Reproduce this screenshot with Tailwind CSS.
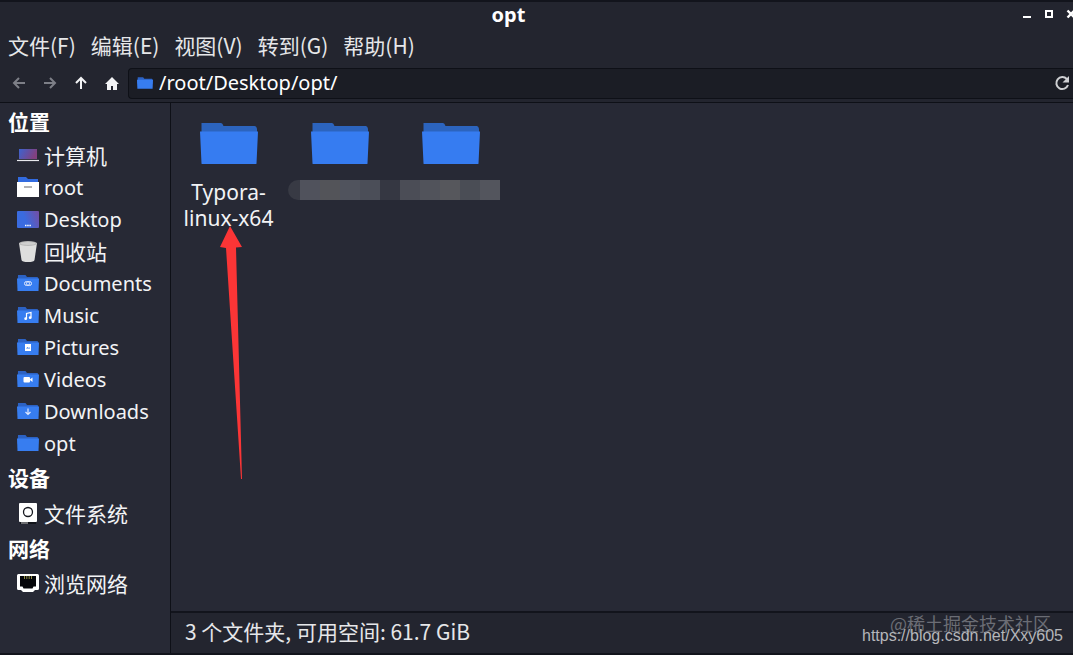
<!DOCTYPE html>
<html lang="zh-CN">
<head>
    <meta charset="UTF-8">
    <meta name="viewport" content="width=device-width, initial-scale=1.0">
    <title>opt</title>
    <script src="https://cdn.jsdelivr.net/npm/@tailwindcss/browser@4"></script>
</head>
<body class="relative h-screen overflow-hidden flex flex-col bg-[#23252f] text-[#f2f3f5] text-[20px] leading-[26px] font-['Noto_Sans','Noto_Sans_CJK_SC',sans-serif] border-t-2 border-b-2 border-[#12141c]">

    <!-- Shared icon shapes -->
    <svg class="hidden">
        <symbol id="folder" viewBox="0 0 22 16">
            <path d="M1 0h7.5l1.5 2h10.5l.7 1v6H.7z" fill="#2c62c4"/>
            <path d="M0 3.5h22l-.5 12.5H.5z" fill="#377df0"/>
        </symbol>
        <symbol id="folder-big" viewBox="0 0 58 42">
            <path d="M1.500 1h19.500q1.500 0 2.500 3h31q2 0 2.500 3v6H1.500z" fill="#2c64be"/>
            <path d="M0 9.500h58l-1.500 32q0 .5-1 .5H2.500q-1 0-1-.5z" fill="#367cf1"/>
        </symbol>
    </svg>

    <!-- Title bar -->
    <header class="relative h-[26px] shrink-0 flex items-center justify-center pr-14">
        <h1 class="font-bold text-white">opt</h1>
        <div class="absolute right-0 top-0 h-full flex items-start gap-2 pt-1 -mr-[5px]">
            <button aria-label="Minimize" class="size-[14px]"><svg viewBox="0 0 14 14" class="size-[14px]"><path d="M3 10h8v2H3z" fill="#fff"/></svg></button>
            <button aria-label="Maximize" class="size-[14px]"><svg viewBox="0 0 14 14" class="size-[14px]"><path d="M4 5h6v6H4z" fill="none" stroke="#fff" stroke-width="2"/></svg></button>
            <button aria-label="Close" class="size-[14px]"><svg viewBox="0 0 14 14" class="size-[14px]"><path d="M3.500 4.500l7 7m0-7l-7 7" stroke="#fff" stroke-width="2.400"/></svg></button>
        </div>
    </header>

    <!-- Menu -->
    <nav class="h-[34px] mb-0.5 shrink-0 flex items-center gap-[15px] pl-2 text-[21px] font-['Noto_Sans_CJK_SC',sans-serif] text-[#e6e7e9]">
        <button>文件(F)</button>
        <button>编辑(E)</button>
        <button>视图(V)</button>
        <button>转到(G)</button>
        <button>帮助(H)</button>
    </nav>

    <!-- Toolbar -->
    <div class="h-[39px] shrink-0 flex items-center border-b border-[#0e1017]">
        <div class="flex items-center gap-[15px] pl-[11px] pr-[8px]">
            <button aria-label="Back" disabled class="size-4"><svg viewBox="0 0 16 16" class="size-4" fill="none" stroke="#7d7f87" stroke-width="2"><path d="M14 8H3M8 3L3 8l5 5"/></svg></button>
            <button aria-label="Forward" disabled class="size-4"><svg viewBox="0 0 16 16" class="size-4" fill="none" stroke="#7d7f87" stroke-width="2"><path d="M2 8h11M8 3l5 5-5 5"/></svg></button>
            <button aria-label="Up" class="size-4"><svg viewBox="0 0 16 16" class="size-4" fill="none" stroke="#f2f3f5" stroke-width="2"><path d="M8 14V3M3 8l5-5 5 5"/></svg></button>
            <button aria-label="Home" class="size-4"><svg viewBox="0 0 16 16" class="size-4" fill="#f2f3f5"><path d="M8 2L1 9h2v6h4v-4h2v4h4V9h2z"/></svg></button>
        </div>
        <div class="flex-1 h-[31px] flex items-center bg-[#1b1d25] border border-r-0 border-[#0e1017] rounded-l pl-2">
            <svg class="w-4 h-3 shrink-0"><use href="#folder"/></svg>
            <input type="text" aria-label="Location" value="/root/Desktop/opt/" class="flex-1 min-w-0 ml-1.5 bg-transparent outline-none text-white">
            <button aria-label="Reload" class="size-4 mr-[3px]"><svg viewBox="0 0 16 16" class="size-4"><path d="M12.800 4A6 6 0 1 0 14 10" fill="none" stroke="#cfd0d3" stroke-width="2"/><path d="M15 1v6.500H8.500z" fill="#cfd0d3"/></svg></button>
        </div>
    </div>

    <div class="flex-1 min-h-0 flex">
        <!-- Sidebar -->
        <aside class="w-[171px] shrink-0 bg-[#272935] border-r border-[#0e1017] pt-px">
            <h2 class="h-9 flex items-center pl-2 text-[21px] font-bold text-white">位置</h2>
            <ul>
                <li><a href="#" class="h-8 flex items-center gap-[5px] pl-[17px] text-[21px]">
                    <svg viewBox="0 0 22 22" class="size-[22px]"><defs><linearGradient id="screen" x2="1" y2=".3"><stop stop-color="#3d63cf"/><stop offset="1" stop-color="#82407f"/></linearGradient></defs><path d="M2 4h18v10H2z" fill="url(#screen)"/><path d="M0 15.500h22" stroke="#e8e9ee" stroke-width="1.200"/></svg>计算机</a></li>
                <li><a href="#" class="h-8 flex items-center gap-[5px] pl-[17px]">
                    <svg viewBox="0 0 22 22" class="size-[22px]"><path d="M1 0h8l2 2h10v6H1z" fill="#326be0"/><path d="M0 5h22v15H0z" fill="#fff"/><path d="M7 10h8" stroke="#a9a9ab" stroke-width="1.800"/></svg>root</a></li>
                <li><a href="#" class="h-8 flex items-center gap-[5px] pl-[17px]">
                    <svg viewBox="0 0 22 22" class="size-[22px]"><defs><linearGradient id="desk" x2="1" y2="-.3"><stop offset=".2" stop-color="#3a6bdf"/><stop offset="1" stop-color="#7c4a9c"/></linearGradient></defs><rect y="2" width="22" height="17" rx="1" fill="url(#desk)"/><path d="M8 16.500h6" stroke="#fff" stroke-width="1.500" stroke-dasharray="1.500 .7"/></svg>Desktop</a></li>
                <li><a href="#" class="h-8 flex items-center gap-[5px] pl-[17px] text-[21px]">
                    <svg viewBox="0 0 22 22" class="size-[22px]"><path d="M2 2l2.500 17q.5 2 6.500 2t6.500-2L20 2z" fill="#dedede"/><ellipse cx="11" cy="2.500" rx="9" ry="2.500" fill="#b9b9b9"/><ellipse cx="11" cy="2.500" rx="7.500" ry="1.500" fill="#cfcfcf"/></svg>回收站</a></li>
                <li><a href="#" class="h-8 flex items-center gap-[5px] pl-[17px]">
                    <svg viewBox="0 0 22 22" class="size-[22px]"><use href="#folder" y="2" width="22" height="16"/><g fill="none" stroke="#dfe9ff"><rect x="7.500" y="8.500" width="5" height="4" rx="2"/><rect x="9.500" y="8.500" width="5" height="4" rx="2"/></g></svg>Documents</a></li>
                <li><a href="#" class="h-8 flex items-center gap-[5px] pl-[17px]">
                    <svg viewBox="0 0 22 22" class="size-[22px]"><use href="#folder" y="2" width="22" height="16"/><path d="M9.500 13.500v-5l4.500-1v5" fill="none" stroke="#fff" stroke-width="1.200"/><circle cx="8.700" cy="13.700" r="1.400" fill="#fff"/><circle cx="13.200" cy="12.700" r="1.400" fill="#fff"/></svg>Music</a></li>
                <li><a href="#" class="h-8 flex items-center gap-[5px] pl-[17px]">
                    <svg viewBox="0 0 22 22" class="size-[22px]"><use href="#folder" y="2" width="22" height="16"/><path d="M8 7h6v7H8z" fill="#fff"/><path d="M9 11.500l1.500-1.500 1 1 .7-.7 1 1.200z" fill="#377df0"/></svg>Pictures</a></li>
                <li><a href="#" class="h-8 flex items-center gap-[5px] pl-[17px]">
                    <svg viewBox="0 0 22 22" class="size-[22px]"><use href="#folder" y="2" width="22" height="16"/><rect x="6.500" y="8" width="6.500" height="5.500" rx="1" fill="#fff"/><path d="M12.500 10.700l3-2.200v4.500z" fill="#fff"/></svg>Videos</a></li>
                <li><a href="#" class="h-8 flex items-center gap-[5px] pl-[17px]">
                    <svg viewBox="0 0 22 22" class="size-[22px]"><use href="#folder" y="2" width="22" height="16"/><path d="M11 7.500v6M8.500 11l2.500 2.500 2.500-2.500" fill="none" stroke="#dfe9ff" stroke-width="1.200"/></svg>Downloads</a></li>
                <li><a href="#" class="h-8 flex items-center gap-[5px] pl-[17px]">
                    <svg viewBox="0 0 22 22" class="size-[22px]"><use href="#folder" y="2" width="22" height="16"/></svg>opt</a></li>
            </ul>
            <h2 class="h-9 flex items-center pl-2 text-[21px] font-bold text-white">设备</h2>
            <a href="#" class="h-[35px] flex items-center gap-[5px] pl-[17px] text-[21px]">
                <svg viewBox="0 0 22 22" class="size-[22px]"><rect x="2" width="18" height="19" rx="1" fill="#fff"/><circle cx="11" cy="9" r="4.500" fill="none" stroke="#16181f" stroke-width="1.300"/><path d="M3 20h16" stroke="#0b0c10" stroke-width="1.500"/><path d="M4 20h7" stroke="#ccc"/></svg>文件系统</a>
            <h2 class="h-[35px] flex items-center pl-2 text-[21px] font-bold text-white">网络</h2>
            <a href="#" class="h-[35px] flex items-center gap-[5px] pl-[17px] text-[21px]">
                <svg viewBox="0 0 22 22" class="size-[22px]"><path d="M1.500 1h19q1.500 0 1.500 1.500v13q0 1.500-1.500 1.500H18l-2 2H6l-2-2H1.500Q0 17 0 15.500v-13Q0 1 1.500 1z" fill="#fff"/><path d="M3 3h16v10.500h-2.500l-1 2h-9l-1-2H3z" fill="#05060a"/><path d="M7.500 3v3m2.300-3v3m2.400-3v3m2.300-3v3" stroke="#8d8a45"/></svg>浏览网络</a>
        </aside>

        <main class="flex-1 min-w-0 flex flex-col">
            <!-- Files -->
            <section class="relative flex-1 bg-[#272935] flex items-start pl-[2px] pt-[19px] text-center">
                <a href="#" class="w-[111px] flex flex-col items-center gap-[15px] text-[21px]">
                    <svg class="w-[58px] h-[42px]"><use href="#folder-big"/></svg>
                    <span>Typora-<br>linux-x64</span>
                </a>
                <a href="#" aria-label="folder" class="w-[111px] flex flex-col items-center">
                    <svg class="w-[58px] h-[42px]"><use href="#folder-big"/></svg>
                </a>
                <a href="#" aria-label="folder" class="w-[111px] flex flex-col items-center">
                    <svg class="w-[58px] h-[42px]"><use href="#folder-big"/></svg>
                </a>

                <!-- Hidden names -->
                <div class="absolute left-[117px] top-[77px] h-5 w-[212px] flex rounded-l-full overflow-hidden">
                    <i class="w-3 bg-[#383a44]"></i>
                    <i class="w-5 bg-[#50525c]"></i>
                    <i class="w-5 bg-[#535459]"></i>
                    <i class="w-5 bg-[#50535d]"></i>
                    <i class="w-5 bg-[#4b4e58]"></i>
                    <i class="w-5 bg-[#353742]"></i>
                    <i class="w-5 bg-[#4b4d56]"></i>
                    <i class="w-5 bg-[#51535b]"></i>
                    <i class="w-5 bg-[#56575c]"></i>
                    <i class="w-5 bg-[#4a4d55]"></i>
                    <i class="w-5 bg-[#53555d]"></i>
                </div>

                <!-- Red arrow -->
                <svg viewBox="0 0 24 256" class="absolute left-[48px] top-[122px] w-6 h-64"><path d="M11 1l12 21-6 .5L23 254h-1L7 23l-6-1z" fill="#fb3536"/></svg>
            </section>

            <!-- Status bar -->
            <footer class="h-[42px] shrink-0 flex items-center pl-[14px] pb-1 border-t-2 border-[#12141c] text-[21px] font-['Noto_Sans_CJK_SC',sans-serif] text-[#e6e7e9]">3 个文件夹, 可用空间: 61.7 GiB</footer>
        </main>
    </div>

    <!-- Watermarks -->
    <p class="absolute right-[22px] bottom-[20px] text-[18px] leading-5 text-[#6b6d75] font-['Noto_Sans_CJK_SC',sans-serif]">@稀土掘金技术社区</p>
    <p class="absolute right-[10px] bottom-[7px] text-[16px] leading-5 text-[#b5b6ba] font-['Liberation_Sans',sans-serif]">https://blog.csdn.net/Xxy605</p>
</body>
</html>
